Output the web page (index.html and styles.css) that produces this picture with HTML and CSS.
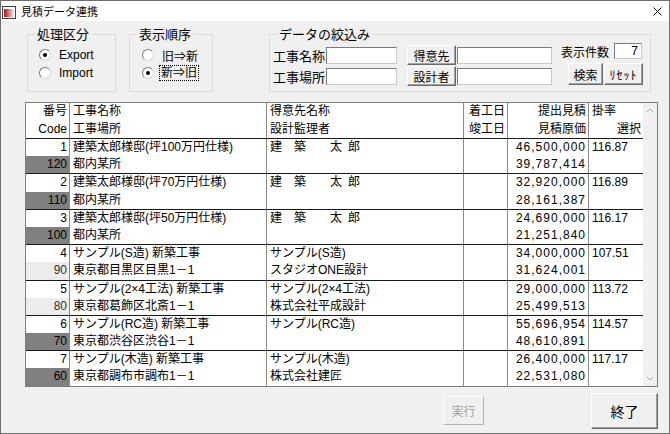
FILE: index.html
```html
<!DOCTYPE html>
<html lang="ja">
<head>
  <meta charset="UTF-8">
  <title>見積データ連携</title>
  <link rel="stylesheet" href="styles.css">
</head>
<body>
  <div class="window">
    <!-- Title bar -->
    <div class="titlebar">
      <svg class="app-icon" width="14" height="13" viewBox="0 0 14 13">
        <defs>
          <linearGradient id="iconGrad" x1="0" x2="1" y1="0" y2="0">
            <stop offset="0" stop-color="#a8141c"/>
            <stop offset="1" stop-color="#fbe9e9"/>
          </linearGradient>
        </defs>
        <rect x="0.5" y="0.5" width="13" height="12" fill="#fff" stroke="#404040"/>
        <rect x="2" y="3" width="10" height="8" fill="url(#iconGrad)"/>
      </svg>
      <span class="title">見積データ連携</span>
      <svg class="close" width="9" height="9" viewBox="0 0 9 9">
        <path d="M0.5 0.5 L8.5 8.5 M8.5 0.5 L0.5 8.5" stroke="#111" stroke-width="1"/>
      </svg>
    </div>

    <div class="client">
      <!-- Filter groups -->
      <div class="filters">
        <fieldset class="group group-mode">
          <legend>処理区分</legend>
          <div class="radios">
            <label class="radio checked"><span class="dot"></span>Export</label>
            <label class="radio"><span class="dot"></span>Import</label>
          </div>
        </fieldset>

        <fieldset class="group group-order">
          <legend>表示順序</legend>
          <div class="radios">
            <label class="radio"><span class="dot"></span>旧⇒新</label>
            <label class="radio checked"><span class="dot"></span><span class="focus">新⇒旧</span></label>
          </div>
        </fieldset>

        <fieldset class="group group-search">
          <legend>データの絞込み</legend>
          <div class="search">
            <div class="search-fields">
              <div class="search-row">
                <span class="field-label">工事名称</span>
                <span class="text short"></span>
                <button class="btn pick">得意先</button>
                <span class="text wide"></span>
              </div>
              <div class="search-row">
                <span class="field-label">工事場所</span>
                <span class="text short"></span>
                <button class="btn pick">設計者</button>
                <span class="text wide"></span>
              </div>
            </div>
            <div class="search-side">
              <div class="count-row">
                <span class="count-label">表示件数</span>
                <span class="text count">7</span>
              </div>
              <div class="side-buttons">
                <button class="btn find">検索</button>
                <button class="btn reset">ﾘｾｯﾄ</button>
              </div>
            </div>
          </div>
        </fieldset>
      </div>

      <!-- Estimate list -->
      <div class="grid">
        <table class="list">
          <colgroup>
            <col class="w-no">
            <col class="w-name">
            <col class="w-client">
            <col class="w-date">
            <col class="w-price">
            <col class="w-rate">
          </colgroup>
          <thead>
            <tr>
              <th><div class="line r">番号</div><div class="line r">Code</div></th>
              <th><div class="line">工事名称</div><div class="line">工事場所</div></th>
              <th><div class="line">得意先名称</div><div class="line">設計監理者</div></th>
              <th><div class="line r">着工日</div><div class="line r">竣工日</div></th>
              <th><div class="line r">提出見積</div><div class="line r">見積原価</div></th>
              <th class="last"><div class="line">掛率</div><div class="line r">選択</div></th>
            </tr>
          </thead>
          <tbody>
            <tr>
              <td><div class="line r">1</div><div class="line r code dark">120</div></td>
              <td><div class="line">建築太郎様邸(坪100万円仕様)</div><div class="line">都内某所</div></td>
              <td><div class="line">建　築　　太&#8194;郎</div><div class="line"></div></td>
              <td><div class="line"></div><div class="line"></div></td>
              <td><div class="line r num">46,500,000</div><div class="line r num">39,787,414</div></td>
              <td class="last"><div class="line">116.87</div><div class="line"></div></td>
            </tr>
            <tr>
              <td><div class="line r">2</div><div class="line r code dark">110</div></td>
              <td><div class="line">建築太郎様邸(坪70万円仕様)</div><div class="line">都内某所</div></td>
              <td><div class="line">建　築　　太&#8194;郎</div><div class="line"></div></td>
              <td><div class="line"></div><div class="line"></div></td>
              <td><div class="line r num">32,920,000</div><div class="line r num">28,161,387</div></td>
              <td class="last"><div class="line">116.89</div><div class="line"></div></td>
            </tr>
            <tr>
              <td><div class="line r">3</div><div class="line r code dark">100</div></td>
              <td><div class="line">建築太郎様邸(坪50万円仕様)</div><div class="line">都内某所</div></td>
              <td><div class="line">建　築　　太&#8194;郎</div><div class="line"></div></td>
              <td><div class="line"></div><div class="line"></div></td>
              <td><div class="line r num">24,690,000</div><div class="line r num">21,251,840</div></td>
              <td class="last"><div class="line">116.17</div><div class="line"></div></td>
            </tr>
            <tr>
              <td><div class="line r">4</div><div class="line r code light">90</div></td>
              <td><div class="line">サンプル(S造) 新築工事</div><div class="line">東京都目黒区目黒1－1</div></td>
              <td><div class="line">サンプル(S造)</div><div class="line">スタジオONE設計</div></td>
              <td><div class="line"></div><div class="line"></div></td>
              <td><div class="line r num">34,000,000</div><div class="line r num">31,624,001</div></td>
              <td class="last"><div class="line">107.51</div><div class="line"></div></td>
            </tr>
            <tr>
              <td><div class="line r">5</div><div class="line r code light">80</div></td>
              <td><div class="line">サンプル(2×4工法) 新築工事</div><div class="line">東京都葛飾区北斎1－1</div></td>
              <td><div class="line">サンプル(2×4工法)</div><div class="line">株式会社平成設計</div></td>
              <td><div class="line"></div><div class="line"></div></td>
              <td><div class="line r num">29,000,000</div><div class="line r num">25,499,513</div></td>
              <td class="last"><div class="line">113.72</div><div class="line"></div></td>
            </tr>
            <tr>
              <td><div class="line r">6</div><div class="line r code dark">70</div></td>
              <td><div class="line">サンプル(RC造) 新築工事</div><div class="line">東京都渋谷区渋谷1－1</div></td>
              <td><div class="line">サンプル(RC造)</div><div class="line"></div></td>
              <td><div class="line"></div><div class="line"></div></td>
              <td><div class="line r num">55,696,954</div><div class="line r num">48,610,891</div></td>
              <td class="last"><div class="line">114.57</div><div class="line"></div></td>
            </tr>
            <tr>
              <td><div class="line r">7</div><div class="line r code dark">60</div></td>
              <td><div class="line">サンプル(木造) 新築工事</div><div class="line">東京都調布市調布1－1</div></td>
              <td><div class="line">サンプル(木造)</div><div class="line">株式会社建匠</div></td>
              <td><div class="line"></div><div class="line"></div></td>
              <td><div class="line r num">26,400,000</div><div class="line r num">22,531,080</div></td>
              <td class="last"><div class="line">117.17</div><div class="line"></div></td>
            </tr>
          </tbody>
        </table>
        <div class="scrollbar">
          <svg width="14" height="16" viewBox="0 0 14 16"><path d="M4 9 L7 6 L10 9" fill="none" stroke="#a6a6a6" stroke-width="1"/></svg>
          <svg width="14" height="16" viewBox="0 0 14 16"><path d="M4 7 L7 10 L10 7" fill="none" stroke="#a6a6a6" stroke-width="1"/></svg>
        </div>
      </div>

      <!-- Bottom buttons -->
      <div class="footer">
        <button class="btn run" disabled>実行</button>
        <button class="btn quit">終了</button>
      </div>
    </div>
  </div>
</body>
</html>
```

FILE: styles.css
```css
/* Reset */
* {
  margin: 0;
  padding: 0;
  box-sizing: border-box;
}
body {
  font-family: "Liberation Sans", "Noto Sans CJK JP", sans-serif;
  font-size: 12px;
  color: #000;
  background: #fff;
}
/* Window frame */
.window {
  width: 670px;
  height: 434px;
  border: 1px solid #6e6e6e;
  display: flex;
  flex-direction: column;
  background: #f0f0f0;
}
.titlebar {
  height: 20px;
  background: #fff;
  display: flex;
  align-items: center;
  padding-left: 1px;
}
.app-icon {
  margin-top: 3px;
}
.title {
  margin-left: 5px;
  font-size: 11px;
  font-family: "Noto Sans CJK JP", sans-serif;
}
.close {
  margin-left: auto;
  margin-right: 7px;
  margin-top: 1px;
}
.client {
  flex: 1;
  padding: 6px 11px 0 24px;
}
/* Group boxes */
.filters {
  display: flex;
  height: 65px;
}
.group {
  border: 1px solid #d9d9d9;
  padding: 0;
  height: 65px;
}
.group legend {
  font-family: "Noto Sans CJK JP", sans-serif;
  font-size: 13px;
  line-height: 14px;
  padding: 0 3px;
  margin-left: 6px;
}
.group-mode {
  margin-left: 2px;
  width: 89px;
}
.group-order {
  margin-left: 13px;
  width: 84px;
}
.group-search {
  margin-left: 56px;
  width: 382px;
}
.radios {
  padding-top: 5px;
}
.group-mode .radios {
  padding-left: 11px;
}
.group-order .radios {
  padding-left: 12px;
}
.radio {
  display: flex;
  align-items: center;
  height: 18px;
  font-size: 12px;
}
.dot {
  width: 12px;
  height: 12px;
  border-radius: 50%;
  border: 1px solid;
  border-color: #7a7a7a #d6d6d6 #d6d6d6 #7a7a7a;
  background: #fff;
  display: flex;
  align-items: center;
  justify-content: center;
  margin-right: 8px;
}
.radio.checked .dot::after {
  content: "";
  width: 4px;
  height: 4px;
  border-radius: 50%;
  background: #000;
}
.focus {
  outline: 1px dotted #000;
  outline-offset: 0;
  padding: 0 1px;
  margin-left: -2px;
  line-height: 14px;
}
/* Search group */
.search {
  display: flex;
  padding: 2px 0 0 3px;
}
.search-fields {
  margin-top: 2px;
}
.search-row {
  display: flex;
  align-items: center;
  height: 20px;
  margin-bottom: 1px;
}
.field-label {
  width: 53px;
  font-size: 13px;
  font-family: "Noto Sans CJK JP", sans-serif;
}
.text {
  display: block;
  height: 17px;
  background: #fff;
  border: 1px solid;
  border-color: #7a7a7a #c8c8c8 #c8c8c8 #7a7a7a;
}
.text.short {
  width: 71px;
}
.text.wide {
  width: 95px;
  margin-left: 1px;
}
.btn {
  font-family: "Noto Sans CJK JP", sans-serif;
  font-size: 12px;
  color: #000;
  background: #f0f0f0;
  border: 1px solid;
  border-color: #fff #6a6a6a #6a6a6a #fff;
  box-shadow: inset -1px -1px 0 #a0a0a0;
}
.btn.pick {
  width: 49px;
  height: 20px;
  margin-left: 10px;
}
.search-side {
  margin-left: 9px;
}
.count-row {
  display: flex;
  align-items: center;
  height: 16px;
}
.count-label {
  width: 53px;
  font-family: "Noto Sans CJK JP", sans-serif;
}
.text.count {
  width: 28px;
  height: 16px;
  text-align: right;
  padding-right: 3px;
  line-height: 14px;
}
.side-buttons {
  display: flex;
  margin-top: 4px;
  margin-left: 7px;
}
.btn.find {
  width: 35px;
  height: 22px;
}
.btn.reset {
  width: 39px;
  height: 22px;
  margin-left: 1px;
  letter-spacing: 1px;
}
/* List grid */
.grid {
  display: flex;
  margin-top: 10px;
  border: 1px solid #7d7d7d;
  background: #fff;
}
.list {
  border-collapse: separate;
  border-spacing: 0;
  table-layout: fixed;
  width: 617px;
}
.w-no { width: 44px; }
.w-name { width: 197px; }
.w-client { width: 197px; }
.w-date { width: 44px; }
.w-price { width: 81px; }
.w-rate { width: 54px; }
.list th,
.list td {
  padding: 0;
  font-weight: normal;
  text-align: left;
  vertical-align: top;
  border-right: 1px solid #8a8a8a;
  border-bottom: 1px solid #1a1a1a;
}
.list .last {
  border-right: none;
}
.list tbody tr:last-child td {
  border-bottom: none;
}
.line {
  height: 17.2px;
  line-height: 17.2px;
  padding: 0 2px 0 3px;
  white-space: nowrap;
  overflow: hidden;
}
.list th .line {
  height: 17.5px;
  line-height: 17.5px;
}
.r {
  text-align: right;
}
.num {
  letter-spacing: 1px;
  padding-right: 2px;
}
.code.dark {
  background: #808080;
}
.code.light {
  background: #ececec;
  color: #333;
}
.scrollbar {
  width: 14px;
  background: #f0f0f0;
  display: flex;
  flex-direction: column;
  justify-content: space-between;
}
/* Footer buttons */
.footer {
  display: flex;
  justify-content: flex-end;
  align-items: center;
  height: 36px;
  margin-top: 6px;
}
.btn.run {
  width: 41px;
  height: 29px;
  margin-right: 107px;
  color: #a0a0a0;
  border-color: #fff #b4b4b4 #b4b4b4 #fff;
  box-shadow: none;
}
.btn.quit {
  width: 67px;
  height: 36px;
  font-size: 14px;
}
```
